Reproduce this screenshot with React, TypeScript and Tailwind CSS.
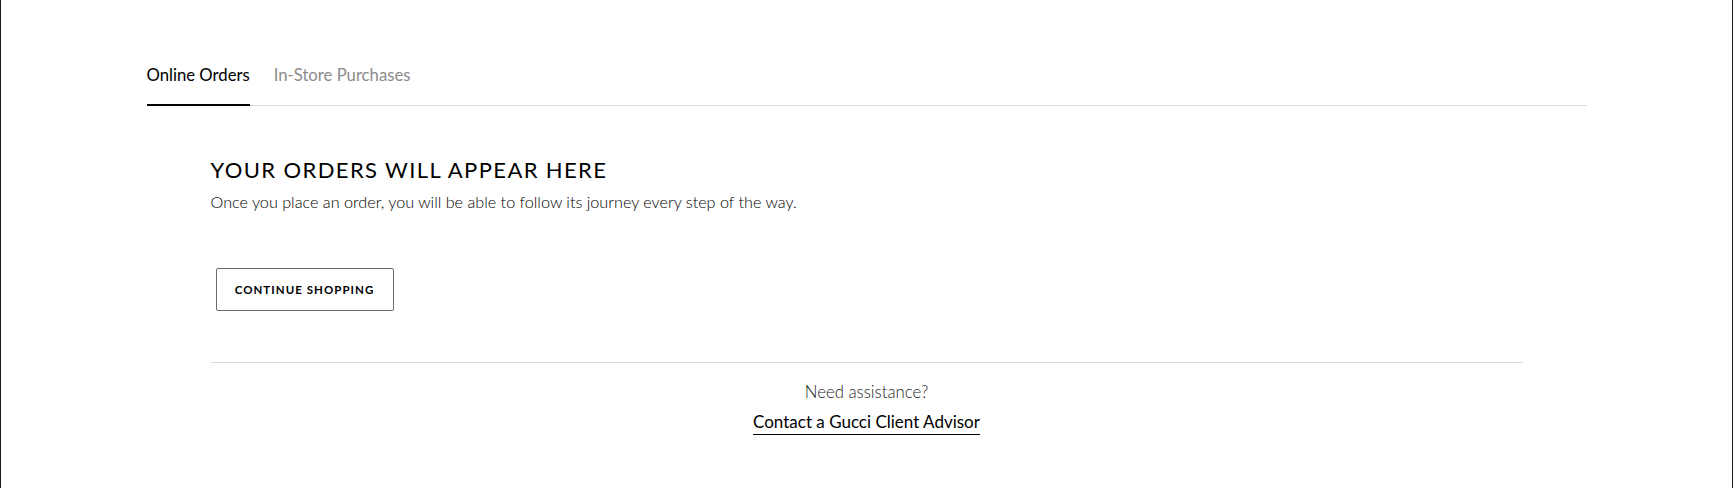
import React from "react";

const tabs = [
  { label: "Online Orders", active: true },
  { label: "In-Store Purchases", active: false },
];

export default function App() {
  return (
    <div className="min-h-screen w-full border-x border-[#1a1a1a] bg-white font-['Lato','Liberation_Sans',sans-serif] text-black">
      <div className="mx-auto w-[1440px] pt-[63px] pb-[50px]">
        {/* tabs */}
        <div className="flex gap-[24px] border-b border-[#d9d9d9]">
          {tabs.map((t) => (
            <button
              key={t.label}
              className={
                t.active
                  ? "-mb-px border-b-2 border-black pb-[17px] text-[16.7px] leading-6 text-black"
                  : "-mb-px border-b-2 border-transparent pb-[17px] text-[16.7px] leading-6 text-[#8c8c8c]"
              }
            >
              {t.label}
            </button>
          ))}
        </div>

        <div className="px-16">
          <h1 className="mt-[50px] text-[22px] leading-7 font-normal tracking-[0.063em]">
            YOUR ORDERS WILL APPEAR HERE
          </h1>
          <p className="mt-[7px] text-[16.2px] leading-[22px] font-light text-black">
            Once you place an order, you will be able to follow its journey every step of the way.
          </p>

          <button className="mt-[55px] ml-[5px] h-[43px] w-[178px] rounded-[2px] border border-[#6b6b6b] text-[11.5px] font-bold tracking-[0.09em] text-black">
            CONTINUE SHOPPING
          </button>

          <div className="mt-[51px] border-t border-[#d9d9d9] pt-[18px] text-center">
            <p className="text-[16.8px] leading-[22px] font-light text-[#222]">Need assistance?</p>
            <a
              href="#"
              className="mt-[7px] inline-block border-b border-black text-[17px] leading-6 text-black"
            >
              Contact a Gucci Client Advisor
            </a>
          </div>
        </div>
      </div>
    </div>
  );
}
